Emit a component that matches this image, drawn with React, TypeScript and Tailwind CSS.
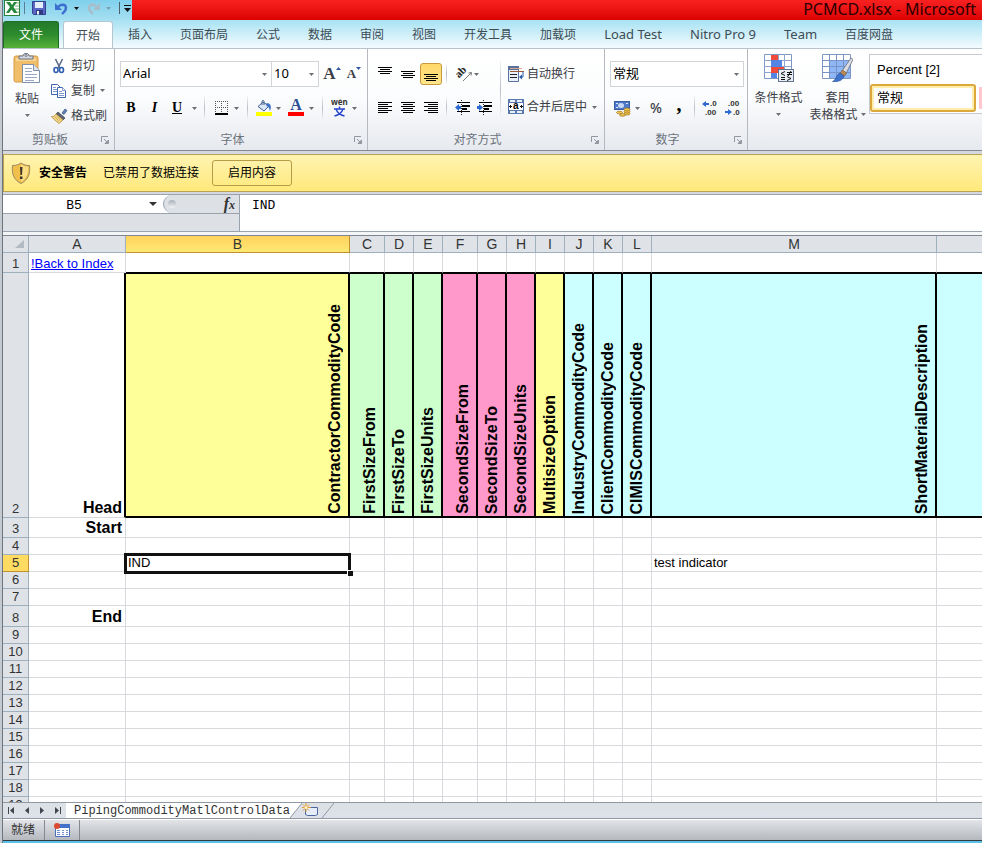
import type { ReactNode } from "react"
import clsx from "clsx"

const menuTabs = ["插入", "页面布局", "公式", "数据", "审阅", "视图", "开发工具", "加载项", "Load Test", "Nitro Pro 9", "Team", "百度网盘"]

type Column = { name: string; width: string; head?: string; fill?: string }

const columns: Column[] = [
  { name: "B", width: "w-[224px]", head: "ContractorCommodityCode", fill: "bg-[#ffff99]" },
  { name: "C", width: "w-[35px]", head: "FirstSizeFrom", fill: "bg-[#ccffcc]" },
  { name: "D", width: "w-[29px]", head: "FirstSizeTo", fill: "bg-[#ccffcc]" },
  { name: "E", width: "w-[29px]", head: "FirstSizeUnits", fill: "bg-[#ccffcc]" },
  { name: "F", width: "w-[35px]", head: "SecondSizeFrom", fill: "bg-[#ff99cc]" },
  { name: "G", width: "w-[29px]", head: "SecondSizeTo", fill: "bg-[#ff99cc]" },
  { name: "H", width: "w-[29px]", head: "SecondSizeUnits", fill: "bg-[#ff99cc]" },
  { name: "I", width: "w-[29px]", head: "MultisizeOption", fill: "bg-[#ffff99]" },
  { name: "J", width: "w-[29px]", head: "IndustryCommodityCode", fill: "bg-[#ccffff]" },
  { name: "K", width: "w-[29px]", head: "ClientCommodityCode", fill: "bg-[#ccffff]" },
  { name: "L", width: "w-[29px]", head: "CIMISCommodityCode", fill: "bg-[#ccffff]" },
  { name: "M", width: "w-[285px]", head: "ShortMaterialDescription", fill: "bg-[#ccffff]" },
  { name: "", width: "", fill: "bg-[#ccffff]" },
]

const rowLabels: Record<number, string> = { 2: "Head", 3: "Start", 8: "End" }
const rowHeights: Record<number, string> = { 1: "h-5", 2: "h-[245px]", 3: "h-5", 8: "h-[21px]" }
const rows = Array.from({ length: 19 }, (_, i) => i + 1)

function Arrow({ className }: { className?: string }) {
  return (
    <svg width="5" height="3" viewBox="0 0 5 3" className={clsx("shrink-0", className ?? "text-[#6b6f75]")} aria-hidden="true">
      <path d="M0 0h5L2.500 3z" fill="currentColor" />
    </svg>
  )
}

function Tool({ label, className, children }: { label: string; className?: string; children: ReactNode }) {
  return (
    <button type="button" aria-label={label} className={clsx("flex h-[22px] shrink-0 items-center justify-center", className)}>
      {children}
    </button>
  )
}

function Rule({ className }: { className?: string }) {
  return <span className={clsx("w-px shrink-0 bg-linear-to-b from-[#f3f4f6] via-[#b9bec6] to-[#f3f4f6]", className ?? "h-6")} />
}

function Combo({ label, value, className }: { label: string; value: string; className: string }) {
  return (
    <div className={clsx("flex h-[26px] items-center border border-[#d0d3d7] bg-white pr-1", className)}>
      <select aria-label={label} className="h-full min-w-0 flex-1 appearance-none bg-transparent pl-[2px] text-[13px] text-black">
        <option>{value}</option>
      </select>
      <Arrow />
    </div>
  )
}

function Group({ title, className, children }: { title?: string; className?: string; children: ReactNode }) {
  return (
    <section className={clsx("flex shrink-0 flex-col border-r border-[#b6bac0]", className)}>
      <div className="min-h-0 flex-1">{children}</div>
      {title && (
        <div className="flex h-5 items-center pr-[5px] text-[#6b727c]">
          <span className="flex-1 pr-1 text-center">{title}</span>
          <button type="button" aria-label={`${title} 选项`}>
            <svg width="8" height="8" viewBox="0 0 8 8" fill="none" stroke="#92979e" aria-hidden="true">
              <path d="M.5 6V.5H7M3 3l3 3" />
              <path d="M4 7.500h3.500V4z" fill="#92979e" />
            </svg>
          </button>
        </div>
      )}
    </section>
  )
}

// Text lines two pixels apart, every other one short
function Lines({ count, align }: { count: number; align: "left" | "center" | "right" }) {
  const inset = { left: 0, center: 2, right: 4 }[align]
  const height = count * 2 - 1
  return (
    <svg width="14" height={height} viewBox={`0 0 14 ${height}`} fill="#000" aria-hidden="true">
      {Array.from({ length: count }, (_, i) => (
        <rect key={i} x={i % 2 ? inset : 0} y={i * 2} width={i % 2 ? 10 : 14} height="1" />
      ))}
    </svg>
  )
}

function ExcelIcon() {
  return (
    <svg width="16" height="17" viewBox="0 0 16 17" aria-hidden="true">
      <rect x=".5" y=".5" width="15" height="15" fill="#fff" stroke="#2b8039" />
      <path d="M11 3h4M11 6h4M11 9h4M11 12h4" stroke="#79b681" />
      <path d="M2 2h4l2 3 2-3h3L9.500 7l4 6H10L7.500 9.500 5 13H2l4-6z" fill="#26883a" />
    </svg>
  )
}

function SaveIcon() {
  return (
    <svg width="15" height="15" viewBox="0 0 15 15" aria-hidden="true">
      <path d="M.5.500h13v13h-12l-1-1z" fill="#5a66c4" stroke="#33408f" />
      <path d="M3 1h8v6H3z" fill="#e4edfa" />
      <path d="M4 9h7v4.500H4z" fill="#2f3a80" />
      <path d="M5 10h2v3.500H5z" fill="#f2f4fb" />
    </svg>
  )
}

function UndoIcon({ flip }: { flip?: boolean }) {
  return (
    <svg width="13" height="13" viewBox="0 0 13 13" fill="none" className={flip ? "-scale-x-100" : ""} aria-hidden="true">
      <path d="M3 5.500C5 2 10.500 1.500 11 5.500c.2 3-2 4.500-4 6.500" stroke={flip ? "#a9bcc9" : "#3c6fd0"} strokeWidth="2.400" />
      <path d="M0 1v7h7z" fill={flip ? "#a9bcc9" : "#3c6fd0"} />
    </svg>
  )
}

function PasteIcon() {
  return (
    <svg width="28" height="31" viewBox="0 0 28 31" aria-hidden="true">
      <rect x="1" y="3" width="24" height="26" rx="2" fill="#f0bd69" stroke="#d79b45" />
      <path d="M3 5h20v3H3z" fill="#f8d595" />
      <path d="M6 6V3h4c0-3.500 6-3.500 6 0h4v3z" fill="#d5dae1" stroke="#69727f" />
      <circle cx="13" cy="2.500" r="1" fill="#fff" stroke="#69727f" />
      <path d="M9.500 11.500h11l6 6v12h-17z" fill="#fff" stroke="#8090ab" />
      <path d="M20.500 11.500v6h6" fill="#dfe6f2" stroke="#8090ab" />
      <path d="M12 15.500h7M12 18.500h7M12 21.500h12M12 24.500h12M12 27.500h9" stroke="#9ba9c4" />
    </svg>
  )
}

function CutIcon() {
  return (
    <svg width="16" height="16" viewBox="0 0 16 16" fill="none" aria-hidden="true">
      <path d="M4.500 1l4.500 9M11.500 1L7 10" stroke="#5c6c88" strokeWidth="1.600" />
      <ellipse cx="5" cy="12" rx="2" ry="2.500" stroke="#2f5fae" strokeWidth="1.600" />
      <ellipse cx="10.500" cy="12" rx="2" ry="2.500" stroke="#2f5fae" strokeWidth="1.600" />
    </svg>
  )
}

function CopyIcon() {
  return (
    <svg width="16" height="16" viewBox="0 0 16 16" fill="#fff" stroke="#3f66b0" aria-hidden="true">
      <path d="M.5 1.500h6l3 3v7h-9z" />
      <path d="M2 4.500h3M2 6.500h4M2 8.500h4" stroke="#7f9bd2" />
      <path d="M6.500 4.500h5l3 3v7h-8z" />
      <path d="M11.500 4.500v3h3M8 8.500h3M8 10.500h5M8 12.500h5" stroke="#7f9bd2" />
    </svg>
  )
}

function BrushIcon() {
  return (
    <svg width="17" height="16" viewBox="0 0 17 16" aria-hidden="true">
      <path d="M11 5l3-4 2 1.500-3 4z" fill="#6280b4" stroke="#3d5687" strokeWidth=".7" />
      <path d="M7 4l7 6-2 2-7-6z" fill="#5d6475" stroke="#3b4150" strokeWidth=".7" />
      <path d="M5 6l7 6-4 3.500C5 13 2 11 .5 8.500 2 9 4 8 5 6z" fill="#f1d587" stroke="#b58e38" strokeWidth=".8" />
      <path d="M4 9l4 4M6 8.500l4 4" stroke="#c9a454" strokeWidth=".7" />
    </svg>
  )
}

function BordersIcon() {
  return (
    <svg width="14" height="14" viewBox="0 0 14 14" fill="none" aria-hidden="true">
      <path d="M0 .5h13M0 6.500h13M.5 0v12M6.500 0v12M12.500 0v12" stroke="#555" strokeDasharray="1 1" />
      <path d="M0 13h13" stroke="#000" strokeWidth="2" />
    </svg>
  )
}

function FillIcon() {
  return (
    <svg width="16" height="16" viewBox="0 0 16 16" aria-hidden="true">
      <path d="M2 6.500L7 2l6 4-5 5z" fill="#dbe6f6" stroke="#45618f" />
      <path d="M6 5V1.500c0-1.500 2-1.500 2 0V5" fill="none" stroke="#45618f" />
      <path d="M10.500 3c4 0 5.500 3 3.500 8-1-3-1-4-3.500-5z" fill="#3d70c4" />
      <path d="M0 12h16v4H0z" fill="#ff0" />
    </svg>
  )
}

function OrientIcon() {
  return (
    <svg width="17" height="17" viewBox="0 0 17 17" aria-hidden="true">
      <text x="1" y="10" fontSize="11" fontWeight="bold" fontFamily="Liberation Serif, serif" transform="rotate(-45 5 9)" fill="#222">ab</text>
      <path d="M7 15l8-8M15.500 6.500l-3 .5M15.500 6.500l-.5 3" stroke="#777" fill="none" />
    </svg>
  )
}

function IndentIcon({ increase }: { increase?: boolean }) {
  return (
    <svg width="16" height="15" viewBox="0 0 16 15" aria-hidden="true">
      <path d="M2 2h13v1H2zM7 5h8v2H7zM7 8h5v2H7zM2 11h13v1H2z" />
      <path d="M6.500 0v15" stroke="#222" strokeDasharray="1 1" />
      {increase ? <path d="M0 6h2V4l4 3.500L2 11V9H0z" fill="#2d69d0" /> : <path d="M6 6H4V4L0 7.500 4 11V9h2z" fill="#2d69d0" />}
    </svg>
  )
}

function WrapIcon() {
  return (
    <svg width="16" height="16" viewBox="0 0 16 16" fill="none" aria-hidden="true">
      <path d="M.5.500h10v15H.5z" fill="#eaf0fa" stroke="#5872a0" />
      <path d="M0 0h11v4H0z" fill="#5872a0" />
      <path d="M2 5.500h14" stroke="#9b5a3c" />
      <path d="M2 2.500h12" stroke="#d9a68b" />
      <path d="M2 8.500h7M2 11.500h7" stroke="#222" />
      <path d="M15 6v5h-2" stroke="#2d5ca8" />
      <path d="M11 11l3-2.500v5z" fill="#2d5ca8" />
    </svg>
  )
}

function MergeIcon() {
  return (
    <svg width="16" height="16" viewBox="0 0 16 16" aria-hidden="true">
      <path d="M.5.500h15v14H.5z" fill="#d5e2f6" stroke="#4c6ba3" />
      <path d="M0 0h16v4H0zM0 11h16v4H0z" fill="#5a79b1" />
      <path d="M2 2h5M9 2h5M2 13h5M9 13h5" stroke="#eaf0fa" strokeWidth="2" />
      <path d="M1 4h14v7H1z" fill="#fff" />
      <text x="5" y="10" fontSize="10" fontWeight="bold" fontFamily="Liberation Sans, sans-serif">a</text>
      <path d="M1 7.500h3M12 7.500h3M2.500 6v3M13.500 6v3" stroke="#111" />
    </svg>
  )
}

function CurrencyIcon() {
  return (
    <svg width="17" height="17" viewBox="0 0 17 17" aria-hidden="true">
      <rect x=".5" y="1.500" width="15" height="8" fill="#4f78c8" stroke="#3a5da6" />
      <ellipse cx="7" cy="5.500" rx="3" ry="2.500" fill="#c9d9f5" />
      <path d="M2 3.500h2M12 3.500h2M2 7.500h2" stroke="#d9e5fa" />
      <g fill="#f3c64e" stroke="#9b7420" strokeWidth=".7">
        <ellipse cx="13" cy="13.500" rx="3" ry="1.500" />
        <ellipse cx="13" cy="11.500" rx="3" ry="1.500" />
        <ellipse cx="13" cy="9.500" rx="3" ry="1.500" />
        <ellipse cx="5.500" cy="12.500" rx="3" ry="1.300" />
        <ellipse cx="8.500" cy="15" rx="3" ry="1.300" />
      </g>
    </svg>
  )
}

function DecimalIcon({ decrease }: { decrease?: boolean }) {
  return (
    <svg width="17" height="16" viewBox="0 0 17 16" fontFamily="Liberation Sans, sans-serif" fontSize="8" fontWeight="bold" fill="#333" aria-hidden="true">
      <text x={decrease ? 3 : 8} y="6">{decrease ? ".00" : ".0"}</text>
      <text x={decrease ? 8 : 3} y="15">{decrease ? ".0" : ".00"}</text>
      {decrease ? <path d="M0 11h3V9l4 3-4 3v-2H0z" fill="#2d69d0" /> : <path d="M7 3H4V1L0 4l4 3V5h3z" fill="#2d69d0" />}
    </svg>
  )
}

function ConditionalIcon() {
  return (
    <svg width="31" height="29" viewBox="0 0 31 29" aria-hidden="true">
      <path d="M1.500.500h27v24h-27z" fill="#fff" stroke="#7e97c4" />
      <path d="M8.500 0v24M15.500 0v24M21.500 0v24M1 6.500h27M1 12.500h27M1 18.500h27" stroke="#8da5cf" fill="none" />
      <path d="M8 1h7v5H8zM8 13h13v6H8z" fill="#f04a3a" />
      <path d="M8 6h11v7H8zM8 19h6v5H8z" fill="#5585e2" />
      <rect x="15.500" y="15.500" width="15" height="12" fill="#e9eef7" stroke="#62738f" />
      <path d="M22 17.500l-4 2 4 2M18 23.500h4M18 25.500h4M24 18.500h5M24 20.500h5M28 17l-3 5M24 22.500l4 2-4 2" stroke="#111" fill="none" />
    </svg>
  )
}

function TableFormatIcon() {
  return (
    <svg width="31" height="29" viewBox="0 0 31 29" aria-hidden="true">
      <path d="M.5.500h28v24H.5z" fill="#fff" stroke="#7e97c4" />
      <path d="M7 6h21v18H7z" fill="#8fb6f5" />
      <path d="M7.500 0v24M14.500 0v24M21.500 0v24M0 6.500h28M0 12.500h28M0 18.500h28" stroke="#7793c7" fill="none" />
      <path d="M29 4l2 1.500-7 14-4-2.500z" fill="#d9dde3" stroke="#697280" strokeWidth=".8" />
      <path d="M20.500 16l4 3-2 3-4.500-2.500z" fill="#b88954" stroke="#805a30" strokeWidth=".7" />
      <path d="M18 19l4 3c-1 4-5 6-11.500 5.500 4-1.500 3.500-7 7.500-8.500z" fill="#3e74cc" stroke="#2d559c" strokeWidth=".7" />
    </svg>
  )
}

function ShieldIcon() {
  return (
    <svg width="20" height="23" viewBox="0 0 20 23" aria-hidden="true">
      <path d="M10 1c3 2 5 2.500 8.500 2.500C19.500 12 17 18 10 21.500 3 18 .5 12 1.500 3.500 5 3.500 7 3 10 1z" fill="#f0bf4c" stroke="#9a8a62" />
      <path d="M10 2.500c2.500 1.500 4.500 2.200 7 2.300C17.500 11 16 16 10 20z" fill="#fbdf86" />
      <path d="M9 5h2.500L11 13H9.500zM9 14.500h2.500V17H9z" fill="#3c3527" />
    </svg>
  )
}

function Ribbon() {
  return (
    <div className="flex h-[103px] overflow-hidden border-y border-t-[#b8c4cc] border-b-[#858a92] bg-linear-to-b from-white via-[#fbfcfd] to-[#e6e9ee] text-[#3b4047]">
      <Group title="剪贴板" className="w-28">
        <div className="flex pt-1">
          <button type="button" className="flex w-12 flex-col items-center">
            <PasteIcon />
            <span className="mt-[6px] leading-[18px]">粘贴</span>
            <Arrow className="mt-[6px] text-[#6b6f75]" />
          </button>
          <div className="flex flex-col">
            <button type="button" className="flex h-[25px] items-center gap-1"><CutIcon />剪切</button>
            <button type="button" className="flex h-[25px] items-center gap-1"><CopyIcon />复制<Arrow className="ml-px text-[#6b6f75]" /></button>
            <button type="button" className="flex h-[25px] items-center gap-[3px]"><BrushIcon />格式刷</button>
          </div>
        </div>
      </Group>

      <Group title="字体" className="w-[253px]">
        <div className="flex items-center pt-3 pl-[5px]">
          <Combo label="字体" value="Arial" className="w-[152px]" />
          <Combo label="字号" value="10" className="w-[47px] border-l-0" />
          <Tool label="增大字号" className="ml-1 w-[18px]">
            <span className="font-['Liberation_Serif',serif] text-[17px] font-bold">A</span>
            <svg width="5" height="3" className="mb-3" aria-hidden="true"><path d="M0 3h5L2.500 0z" fill="#2f56a8" /></svg>
          </Tool>
          <Tool label="减小字号" className="ml-1 w-[18px]">
            <span className="font-['Liberation_Serif',serif] text-[13px] font-bold">A</span>
            <Arrow className="mb-3 text-[#2f56a8]" />
          </Tool>
        </div>
        <div className="flex items-center pt-[9px] pl-1 text-black">
          <Tool label="加粗" className="w-6"><b className="font-['Liberation_Serif',serif] text-sm">B</b></Tool>
          <Tool label="倾斜" className="w-[23px]"><i className="font-['Liberation_Serif',serif] text-sm font-bold">I</i></Tool>
          <Tool label="下划线" className="w-[22px]"><u className="font-['Liberation_Serif',serif] text-sm font-bold">U</u></Tool>
          <Tool label="下划线样式" className="w-3"><Arrow /></Tool>
          <Rule className="ml-1 h-6" />
          <Tool label="边框" className="ml-[10px] gap-1"><BordersIcon /><Arrow className="ml-px text-[#6b6f75]" /></Tool>
          <Rule className="ml-2 h-6" />
          <Tool label="填充颜色" className="ml-2 gap-1"><FillIcon /><Arrow /></Tool>
          <Tool label="字体颜色" className="ml-[7px] gap-[5px]">
            <span className="flex h-4 w-4 items-end justify-center border-b-4 border-[#f00] font-['Liberation_Serif',serif] text-base leading-[14px] font-bold text-[#2c4f97]">A</span>
            <Arrow />
          </Tool>
          <Rule className="ml-2 h-6" />
          <Tool label="拼音指南" className="ml-2 gap-1">
            <svg width="17" height="18" viewBox="0 0 17 18" aria-hidden="true">
              <text x="0" y="6" fontSize="8" fontWeight="bold" fontFamily="Noto Sans, sans-serif" fill="#333">wén</text>
              <path d="M8.500 7.500v2M3 10h11M12 10c-1 3-4 6-8.500 7M5 10c1 3 4 6 8.500 7" fill="none" stroke="#2443cc" strokeWidth="1.400" />
            </svg>
            <Arrow />
          </Tool>
        </div>
      </Group>

      <Group title="对齐方式" className="w-[237px]">
        <div className="flex">
          <div className="flex w-[132px] flex-col gap-[11px] pt-[14px] pl-[7px]">
            <div className="flex items-center">
              <Tool label="顶端对齐" className="w-5 pb-2"><Lines count={4} align="center" /></Tool>
              <Tool label="垂直居中" className="ml-[3px] w-5"><Lines count={4} align="center" /></Tool>
              <Tool label="底端对齐" className="ml-[2px] w-[22px] rounded-[3px] border border-[#c5993c] bg-linear-to-b from-[#ffd868] to-[#ffe58c] pt-[7px]">
                <Lines count={4} align="center" />
              </Tool>
              <Rule className="ml-1 h-5" />
              <Tool label="方向" className="ml-[9px] gap-px"><OrientIcon /><Arrow /></Tool>
            </div>
            <div className="flex items-center">
              <Tool label="左对齐" className="w-5"><Lines count={6} align="left" /></Tool>
              <Tool label="居中" className="ml-[3px] w-5"><Lines count={6} align="center" /></Tool>
              <Tool label="右对齐" className="ml-[3px] w-5"><Lines count={6} align="right" /></Tool>
              <Rule className="ml-[5px] h-5" />
              <Tool label="减少缩进量" className="ml-2"><IndentIcon /></Tool>
              <Tool label="增加缩进量" className="ml-[6px]"><IndentIcon increase /></Tool>
            </div>
          </div>
          <Rule className="mt-3 h-14" />
          <div className="flex flex-col gap-[11px] pt-[14px] pl-[7px]">
            <button type="button" className="flex h-[22px] items-center gap-[3px]"><WrapIcon />自动换行</button>
            <button type="button" className="flex h-[22px] items-center gap-[3px]"><MergeIcon />合并后居中<Arrow className="ml-[2px] text-[#6b6f75]" /></button>
          </div>
        </div>
      </Group>

      <Group title="数字" className="w-[143px]">
        <div className="pt-3 pl-[5px]">
          <Combo label="数字格式" value="常规" className="w-[134px]" />
        </div>
        <div className="flex items-center pt-[9px] pl-[9px]">
          <Tool label="会计数字格式" className="gap-1"><CurrencyIcon /><Arrow /></Tool>
          <Tool label="百分比样式" className="ml-2 w-4"><span className="text-sm font-medium">%</span></Tool>
          <Tool label="千位分隔样式" className="ml-[7px] w-4 pb-2"><b className="font-['Liberation_Serif',serif] text-xl text-black">,</b></Tool>
          <Rule className="ml-[7px] h-6" />
          <Tool label="增加小数位数" className="ml-[7px]"><DecimalIcon /></Tool>
          <Tool label="减少小数位数" className="ml-[6px]"><DecimalIcon decrease /></Tool>
        </div>
      </Group>

      <div className="flex min-w-0 flex-1 pt-[5px]">
        <button type="button" className="flex w-[61px] shrink-0 flex-col items-center">
          <ConditionalIcon />
          <span className="mt-[6px] leading-[18px]">条件格式</span>
          <Arrow className="mt-[6px] text-[#6b6f75]" />
        </button>
        <button type="button" className="flex w-[57px] shrink-0 flex-col items-center">
          <TableFormatIcon />
          <span className="mt-[6px] leading-[17px]">套用</span>
          <span className="flex items-center gap-[3px] leading-[17px] whitespace-nowrap">表格格式<Arrow /></span>
        </button>
        <div className="ml-[3px] flex h-[60px] min-w-0 flex-1 flex-col border border-r-0 border-[#c6cad0] bg-white font-['Liberation_Sans','Noto_Sans_CJK_SC',sans-serif] text-[13px] text-black">
          <button type="button" className="h-[29px] pl-[7px] text-left whitespace-nowrap">Percent [2]</button>
          <div className="flex items-center">
            <button type="button" className="h-7 w-[106px] shrink-0 rounded-[3px] border-2 border-[#dca83c] pl-[5px] text-left inset-ring-2 inset-ring-[#ffedac]">常规</button>
            <span className="ml-[3px] h-[22px] flex-1 bg-[#ffc7ce]" />
          </div>
        </div>
      </div>
    </div>
  )
}

function FormulaBar() {
  return (
    <div className="flex h-[38px] border-y border-[#9aa2ad] bg-[#dde1e6]">
      <div className="flex w-[237px] shrink-0 flex-col border-r border-[#9aa2ad]">
        <div className="flex h-[19px] items-center border-b border-[#9aa2ad] bg-white">
          <input aria-label="名称框" defaultValue="B5" className="h-full w-[142px] bg-transparent pt-[2px] text-center font-['Liberation_Mono',monospace] text-[13px] leading-4 text-black" />
          <svg width="8" height="4" className="ml-1" aria-hidden="true"><path d="M0 0h8L4 4z" fill="#333" /></svg>
          <div className="ml-[6px] flex h-full flex-1 items-center justify-between rounded-l-full border-l border-[#9aa2ad] bg-[#dde1e6] pr-1 pl-1">
            <span className="h-2 w-2 rounded-full bg-linear-to-b from-[#aab0b8] to-[#f2f4f6]" />
            <button type="button" aria-label="插入函数" className="font-['Liberation_Serif',serif] text-base leading-4 font-bold text-[#333] italic">
              f<span className="text-xs">x</span>
            </button>
          </div>
        </div>
      </div>
      <textarea aria-label="编辑栏" defaultValue="IND" className="min-w-0 flex-1 resize-none bg-white px-3 py-[3px] font-['Liberation_Mono',monospace] text-[13px] leading-4 text-black" />
    </div>
  )
}

function cellContent(row: number, column: string) {
  if (row === 5 && column === "M") return "test indicator"
  if (row !== 5 || column !== "B") return null
  return (
    <div className="relative h-4">
      IND
      <div className="absolute -top-[2px] -right-[2px] -bottom-[3px] -left-1 border-3 border-[#111]" />
      <div className="absolute -right-[4px] -bottom-[5px] h-[6px] w-[6px] border-t border-l border-white bg-[#111]" />
    </div>
  )
}

function Sheet() {
  return (
    <div className="min-h-0 flex-1 overflow-hidden border-t border-[#7f868f] bg-white">
      <table className="w-full table-fixed border-separate border-spacing-0 font-['Liberation_Sans',sans-serif] text-[13px] leading-4 text-black">
        <colgroup>
          <col className="w-[26px]" />
          <col className="w-[97px]" />
          {columns.map((c) => <col key={c.name} className={c.width} />)}
        </colgroup>
        <thead>
          <tr className="h-[17px] text-sm leading-4 text-[#333]">
            <th className="border-r border-b border-[#9eb0be] bg-[#dfe3e8] p-0">
              <svg width="9" height="8" className="mr-1 ml-auto" aria-hidden="true"><path d="M9 0v8H0z" fill="#b4bac2" /></svg>
            </th>
            {["A", ...columns.map((c) => c.name)].map((name) => (
              <th
                key={name}
                scope="col"
                className={clsx(
                  "border-b p-0 font-normal",
                  name && "border-r",
                  name === "B" ? "border-[#c1902f] bg-linear-to-b from-[#ffd25d] to-[#ffe873]" : "border-[#9eb0be] bg-[#dfe3e8]"
                )}
              >
                {name}
              </th>
            ))}
          </tr>
        </thead>
        <tbody>
          {rows.map((row) => (
            <tr key={row} className={rowHeights[row] ?? "h-[17px]"}>
              <th
                scope="row"
                className={clsx(
                  "border-r border-b p-0 text-center align-bottom leading-4 font-normal text-[#333]",
                  row === 5 ? "border-[#c1902f] bg-[#ffdc61]" : "border-[#9eb0be] bg-[#dfe3e8]"
                )}
              >
                {row}
              </th>
              <td
                className={clsx(
                  "border-b border-b-[#d7d9dc] p-0 align-bottom",
                  row === 2 ? "border-r-2 border-r-black pr-[2px]" : "border-r border-r-[#d7d9dc] pr-[3px]",
                  row === 1 ? "pl-[2px] text-left" : "text-right font-bold",
                  rowLabels[row] && "text-base leading-[19px]"
                )}
              >
                {row === 1 ? <a href="#index" className="text-[#0000ff] underline">!Back to Index</a> : rowLabels[row]}
              </td>
              {columns.map((c) =>
                row === 2 ? (
                  <td
                    key={c.name}
                    className={clsx("border-t border-b-2 border-black p-0 align-bottom", c.name && "border-r-2", c.fill)}
                  >
                    <div className="mr-1 ml-auto w-[18px] rotate-180 pt-[2px] text-base leading-[18px] font-bold whitespace-nowrap [writing-mode:vertical-rl]">
                      {c.head}
                    </div>
                  </td>
                ) : (
                  <td
                    key={c.name}
                    className={clsx(
                      "border-b border-r-[#d7d9dc] p-0 pl-[2px] text-left align-bottom",
                      c.name && "border-r",
                      row === 1 ? "border-b-black" : "border-b-[#d7d9dc]"
                    )}
                  >
                    {cellContent(row, c.name)}
                  </td>
                )
              )}
            </tr>
          ))}
        </tbody>
      </table>
    </div>
  )
}

function SheetTabs() {
  return (
    <div className="flex h-[17px] shrink-0 border-y border-[#8f98a3] bg-linear-to-b from-[#dce1e4] to-[#dde1ea]">
      <div className="flex w-[63px] items-center justify-between px-1 text-[#3f4650]">
        {["M1 0h1v7H1zM7 0v7L3 3.500z", "M6 0v7L2 3.500z", "M2 0v7l4-3.500z", "M6 0h1v7H6zM1 0v7l4-3.500z"].map((d, i) => (
          <button key={d} type="button" aria-label={["第一张", "上一张", "下一张", "最后一张"][i]}>
            <svg width="8" height="7" viewBox="0 0 8 7" fill="currentColor" aria-hidden="true"><path d={d} /></svg>
          </button>
        ))}
      </div>
      <button type="button" className="bg-white pt-px pl-2 font-['Liberation_Mono',monospace] text-xs leading-[14px] text-[#333]">
        PipingCommodityMatlControlData
      </button>
      <button type="button" aria-label="插入工作表">
        <svg width="46" height="15" viewBox="0 0 46 15" aria-hidden="true">
          <path d="M0 0h12L0 15z" fill="#fff" />
          <path d="M12 0L0 15M44 0L32 15" stroke="#8f98a3" fill="none" />
          <path d="M15.500 4.500h12v7l-2 1h-8l-2-1z" fill="#e6edfa" stroke="#4d66a0" />
          <path d="M16 0v9M12 4.500h9M13 1.500l6 6M19 1.500l-6 6" stroke="#e09a32" fill="none" />
          <circle cx="16" cy="4.500" r="1.500" fill="#fff3b5" />
        </svg>
      </button>
    </div>
  )
}

export default function App() {
  return (
    <div className="flex h-screen overflow-hidden bg-[#d5d9df] font-['Noto_Sans','Noto_Sans_CJK_SC',sans-serif] text-xs">
      <div className="w-[3px] shrink-0 border-r border-[#6e747c] bg-[#c5cad0]" />
      <div className="flex min-w-0 flex-1 flex-col">
        <header className="flex h-5 shrink-0 bg-linear-to-b from-[#7fd0ec] to-[#a5dff1]">
          <div className="flex w-[129px] shrink-0 items-center pb-1 pl-px">
            <ExcelIcon />
            <span className="ml-1 h-3 w-px bg-[#587f92]" />
            <button type="button" aria-label="保存" className="ml-[7px]"><SaveIcon /></button>
            <button type="button" aria-label="撤消" className="ml-2 flex items-center gap-[6px]"><UndoIcon /><Arrow className="text-[#111]" /></button>
            <button type="button" aria-label="恢复" className="ml-2 flex items-center gap-[6px]"><UndoIcon flip /><Arrow className="text-[#7fa0b0]" /></button>
            <span className="ml-2 h-3 w-px bg-[#4c5f69]" />
            <button type="button" aria-label="自定义快速访问工具栏" className="ml-1">
              <svg width="7" height="7" aria-hidden="true"><path d="M0 0h7v1H0zM0 3h7L3.500 7z" fill="#111" /></svg>
            </button>
          </div>
          <h1 className="min-w-0 flex-1 bg-linear-to-b from-[#f92020] to-[#dc0000] pr-[6px] text-right text-base leading-[18px] whitespace-nowrap text-[#2c0000]">
            PCMCD.xlsx - Microsoft
          </h1>
        </header>

        <nav className="flex h-7 shrink-0 items-end bg-linear-to-b from-[#a7e2f3] to-[#f3fbfe] text-[#3d4c55]">
          <button type="button" className="h-[27px] w-14 rounded-t-[3px] border border-b-0 border-[#1d6b24] bg-linear-to-b from-[#237a2b] via-[#2d8c2d] to-[#56b13a] text-white">文件</button>
          <button type="button" className="-mb-px ml-1 h-7 w-[50px] rounded-t-[3px] border border-b-0 border-[#b5c6cf] bg-white">开始</button>
          <div className="ml-[15px] flex h-[27px] min-w-0 flex-1 items-center gap-7 whitespace-nowrap">
            {menuTabs.map((tab) => (
              <button key={tab} type="button" className={/^[A-Z]/.test(tab) ? "text-[13px]" : ""}>{tab}</button>
            ))}
          </div>
        </nav>

        <div className="shrink-0"><Ribbon /></div>

        <div className="mt-[3px] flex h-[38px] shrink-0 items-center border border-r-0 border-[#b8a355] bg-linear-to-b from-[#fff3b0] to-[#ffe97a] pl-[7px] text-black">
          <ShieldIcon />
          <strong className="ml-2">安全警告</strong>
          <span className="ml-4">已禁用了数据连接</span>
          <button type="button" className="ml-[13px] h-[26px] w-20 rounded-[3px] border border-[#b59c45]">启用内容</button>
        </div>

        <div className="mt-[2px] shrink-0 border-b-3 border-[#f3f5f7]"><FormulaBar /></div>
        <Sheet />
        <SheetTabs />

        <footer className="flex h-[21px] shrink-0 items-center border-t border-white bg-linear-to-b from-[#e2e4e8] to-[#b5b9be] text-[#333]">
          <span className="w-[41px] pl-2">就绪</span>
          <span className="h-full w-px bg-[#85898f]" />
          <button type="button" aria-label="录制宏" className="ml-[9px]">
            <svg width="16" height="14" viewBox="0 0 16 14" aria-hidden="true">
              <path d="M1.500 1.500h14v12h-14z" fill="#fff" stroke="#4d70b7" />
              <path d="M1 1h15v4H1z" fill="#4372c8" />
              <path d="M3 7.500h3M8 7.500h2M12 7.500h2M3 9.500h3M8 9.500h2M12 9.500h2M3 11.500h3M8 11.500h2M12 11.500h2" stroke="#7191cf" />
              <circle cx="3" cy="3" r="3" fill="#dc4a30" />
            </svg>
          </button>
          <span className="ml-[9px] h-full w-px bg-[#85898f]" />
        </footer>
        <div className="h-[3px] shrink-0 border-t border-[#333b42] bg-[#5cc0e6]" />
      </div>
    </div>
  )
}
